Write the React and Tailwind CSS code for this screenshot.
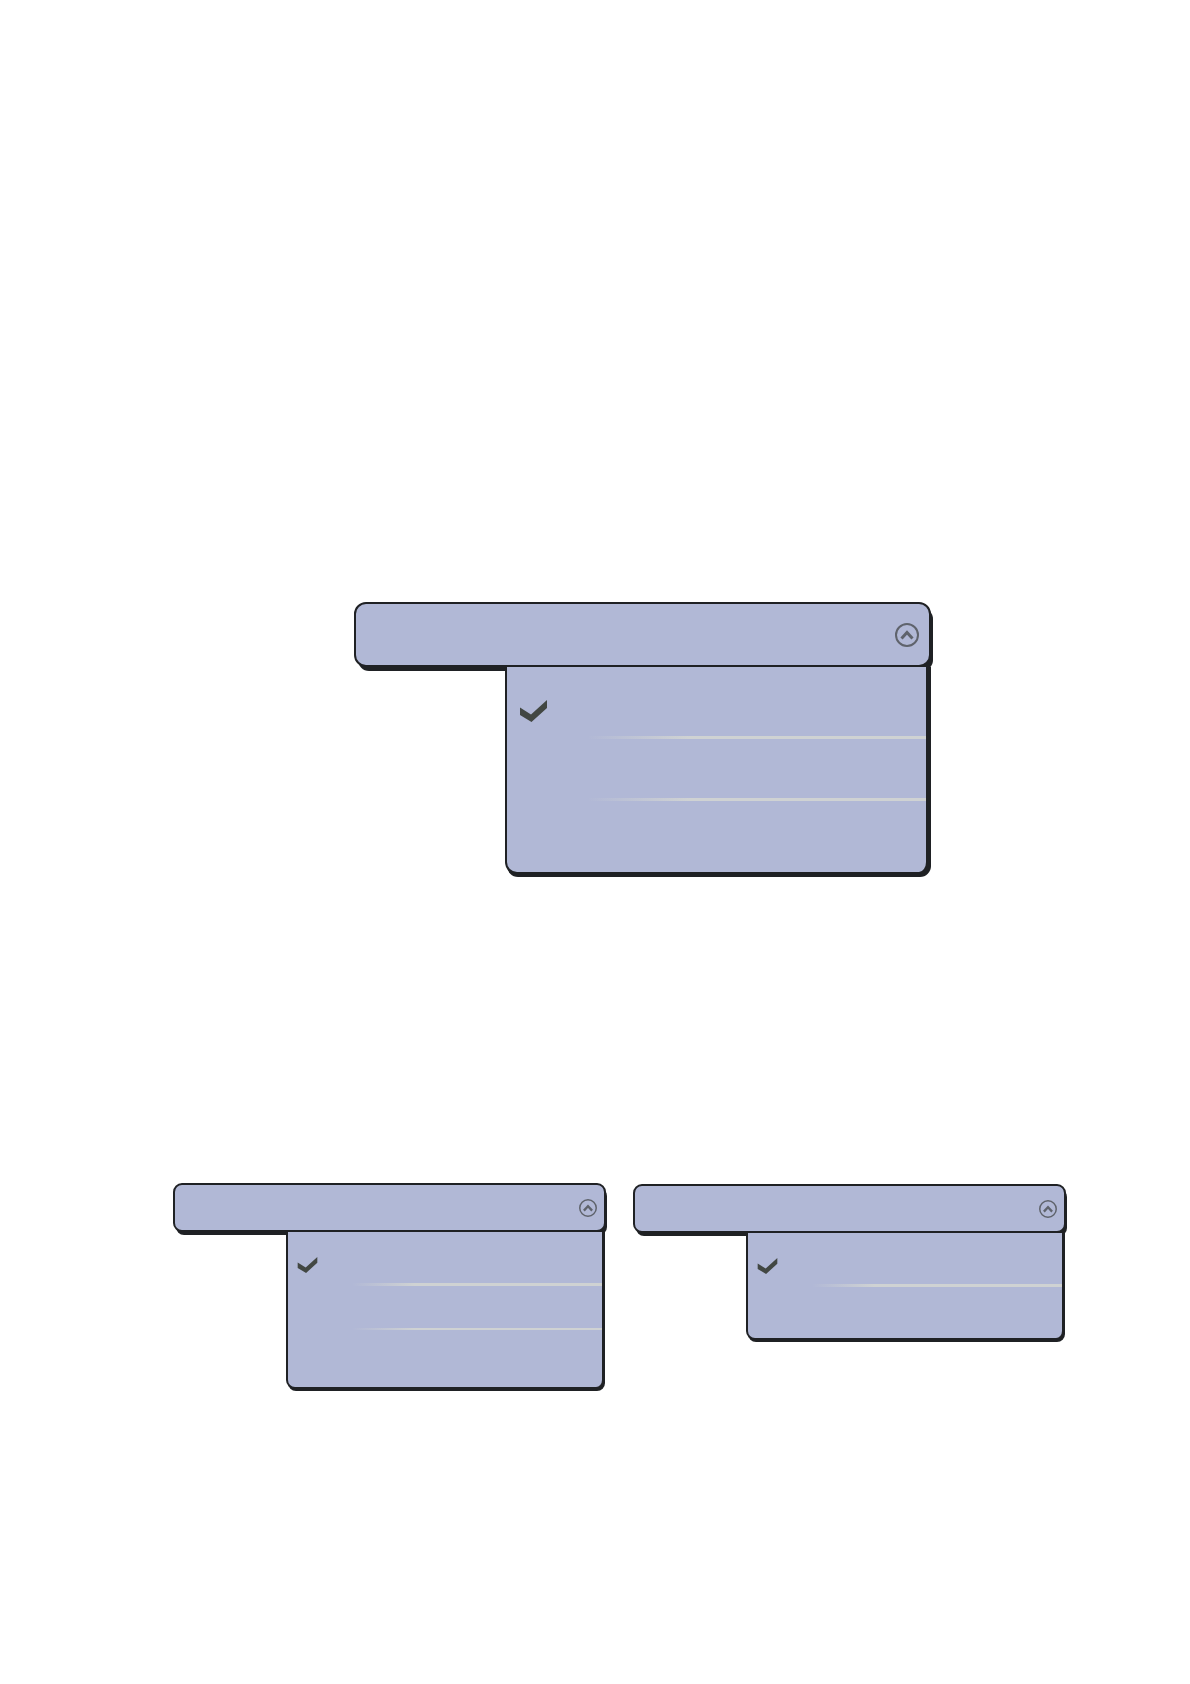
import { useState } from 'react';
import clsx from 'clsx';

function CheckIcon({ className }) {
  return (
    <svg className={className} viewBox="0 0 27 22" fill="#424743" aria-hidden="true">
      <path d="M0 7.500 L11 14.500 L27 0 V8 L11.500 22 L0 15 Z" />
    </svg>
  );
}

function CollapseIcon({ className }) {
  return (
    <svg className={className} viewBox="0 0 24 24" fill="none" stroke="#5f636c" aria-hidden="true">
      <circle cx="12" cy="12" r="11" strokeWidth="2" />
      <path d="M6.500 15.500 L12 9.500 L17.500 15.500" strokeWidth="3" />
    </svg>
  );
}

function Dropdown({ large, rows, label }) {
  const [open, setOpen]         = useState(true);
  const [selected, setSelected] = useState(0);

  return (
    <div className="min-w-0">
      <button
        type="button"
        aria-label={label}
        aria-expanded={open}
        onClick={() => setOpen(!open)}
        className={clsx(
          'flex w-full items-center justify-end border-2 border-[#1f2124] bg-[#b1b8d6]',
          large
            ? 'h-[65px] rounded-xl pr-[10px] shadow-[3px_5px_0_-1px_#1f2124]'
            : 'h-[49px] rounded-[9px] pr-[7px] shadow-[2px_4px_0_-1px_#1f2124]'
        )}
      >
        <CollapseIcon className={large ? 'size-6' : 'size-[18px]'} />
      </button>

      {/* Options, the thick right border is the side of the panel */}
      {open && (
        <ul
          className={clsx(
            'border-2 border-t-0 border-[#1f2124] bg-[#b1b8d6]',
            large
              ? 'ml-[151px] rounded-b-xl border-r-[5px] shadow-[1px_4px_0_-1px_#1f2124]'
              : 'ml-[113px] mr-px rounded-b-[9px] border-r-[3px] shadow-[1px_3px_0_-1px_#1f2124]'
          )}
        >
          {rows.map((height, i) => (
            <li key={i}>
              {i > 0 && (
                <div
                  className={clsx(
                    'bg-linear-to-r from-transparent to-[#cfd2d3]',
                    large ? 'ml-[80px] h-[3px] to-30%' : 'ml-[64px] to-25%',
                    !large && (i > 1 ? 'h-[2px]' : 'h-[3px]')
                  )}
                />
              )}
              <button
                type="button"
                aria-label={`Option ${i + 1}`}
                aria-pressed={selected === i}
                onClick={() => setSelected(i)}
                className={clsx(
                  'flex w-full items-end',
                  height,
                  large ? 'pb-[14px] pl-[13px]' : 'pb-[10px] pl-[9px]'
                )}
              >
                {selected === i && (
                  <CheckIcon className={large ? 'h-[22px] w-[27px]' : 'h-[16px] w-[21px]'} />
                )}
              </button>
            </li>
          ))}
        </ul>
      )}
    </div>
  );
}

export default function App() {
  return (
    <main className="min-h-screen bg-white pt-[602px]">
      <section className="pl-[354px] pr-[259px]">
        <Dropdown large label="Main menu" rows={['h-[69px]', 'h-[59px]', 'h-[71px]']} />
      </section>

      <section className="mt-[309px] grid grid-cols-2 items-start gap-[27px] pl-[173px] pr-[124px]">
        <Dropdown label="Left menu" rows={['h-[51px]', 'h-[42px]', 'h-[57px]']} />
        <div className="pt-px">
          <Dropdown label="Right menu" rows={['h-[51px]', 'h-[51px]']} />
        </div>
      </section>
    </main>
  );
}
